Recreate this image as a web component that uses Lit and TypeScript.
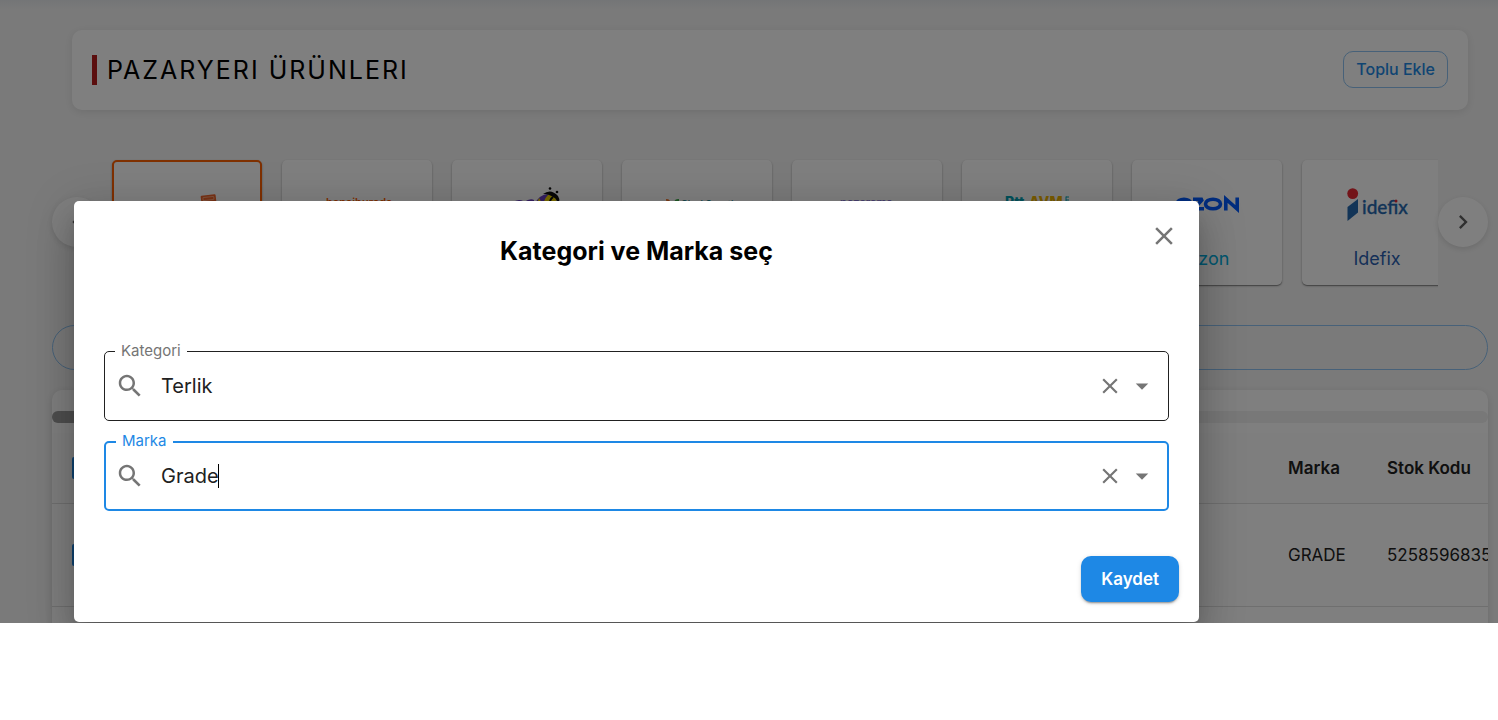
import { LitElement, html, svg, css, nothing } from "lit";
import { customElement, property } from "lit/decorators.js";

const LOGOS: Record<string, unknown> = {
  trendyol: svg`
    <text x="4" y="30" font-size="16" font-weight="600" fill="#444">trendyol</text>
    <rect x="49" y="10" width="15" height="8" rx="1" fill="#f2642a" transform="rotate(-7 56 14)" />
    <rect x="51" y="12" width="11" height="3" rx="1" fill="none" stroke="#ffa67a" transform="rotate(-7 56 14)" />`,
  hepsiburada: svg`<text x="4" y="21" font-size="11" font-weight="600" fill="#ff6000">hepsiburada</text>`,
  n11: svg`
    <g transform="translate(8 0)">
      <path d="M8 34l4-16q6-5 11-2v18zM22 34l2-17q6-4 10-2v19z" fill="#6a3fc4" />
      <path d="M34 20q8-16 22-8v20H35z" fill="#6a3fc4" />
      <path d="M39 13q3 3 1 8h-4zM48 10q-7 7-2 12h7q6-6 2-12z" fill="#f5d800" />
      <path d="M43 9q8-6 15 2q3 5-1 10q1-7-4-9q-4-3-10-3z" fill="#111" />
      <path d="M53 12q-4 3-3 8" stroke="#111" stroke-width="2" fill="none" />
      <circle cx="50" cy="3.500" r="1.300" fill="#111" />
      <circle cx="57" cy="7" r="1.300" fill="#111" />
    </g>`,
  ciceksepeti: svg`
    <path d="M4 14q5-1 6 9q-6-2-6-9z" fill="#f4762d" />
    <path d="M17 14q-6-1-6 9q7-2 6-9z" fill="#3fae49" />
    <text x="19" y="22" font-size="9" font-weight="600" fill="#2f8f9b">ÇiçekSepeti</text>`,
  pazarama: svg`<text x="8" y="21" font-size="11" font-weight="600" fill="#8f7fe0">pazarama</text>`,
  pttavm: svg`
    <text x="3" y="22" font-size="14" font-weight="800" fill="#00a5b8">Ptt</text>
    <text x="27" y="22" font-size="14" font-weight="800" fill="#f5b800">AVM</text>
    <path d="M64 11.500v6M64 12h3M64 15h3" stroke="#00a5b8" fill="none" />`,
  ozon: svg`
    <g fill="none" stroke="#005bff" stroke-width="3.600">
      <ellipse cx="12" cy="19" rx="7" ry="4.800" />
      <path d="M21 14.300h9.500L22 23.700h10" stroke-linejoin="bevel" />
      <ellipse cx="41" cy="19" rx="7.500" ry="4.800" />
      <path d="M53.800 25.500V14L65.200 24V12.500" />
    </g>`,
  idefix: svg`
    <circle cx="10.700" cy="8.600" r="5.400" fill="#e62832" />
    <path d="M5.500 22l10.500-8v13.500L5.500 36z" fill="#2568ae" />
    <text x="20" y="29" font-size="19" font-family="Lato, sans-serif" font-weight="500" fill="#2568ae" stroke="#2568ae" stroke-width=".3">idefix</text>
    <circle cx="54" cy="16" r="1.500" fill="#e62832" />`,
};

const MARKETS = [
  { id: "trendyol", name: "Trendyol", color: "#f27a1a" },
  { id: "hepsiburada", name: "Hepsiburada", color: "#ff6000" },
  { id: "n11", name: "N11", color: "#6a3fc4" },
  { id: "ciceksepeti", name: "ÇiçekSepeti", color: "#3fae49" },
  { id: "pazarama", name: "Pazarama", color: "#6a5fd0" },
  { id: "pttavm", name: "PttAVM", color: "#00a5b8" },
  { id: "ozon", name: "Ozon", color: "#00aee0" },
  { id: "idefix", name: "Idefix", color: "#2b5fb0" },
];

const icon = (d: string, size: number) => html`
  <svg width=${size} height=${size} viewBox="0 0 24 24" fill="currentColor" aria-hidden="true"><path d=${d}></path></svg>
`;
const SEARCH =
  "M15.500 14h-.79l-.28-.27C15.410 12.590 16 11.110 16 9.500 16 5.910 13.090 3 9.500 3S3 5.910 3 9.500 5.910 16 9.500 16c1.610 0 3.090-.59 4.230-1.570l.27.28v.79l5 4.990L20.490 19l-4.990-5zm-6 0C7.010 14 5 11.990 5 9.500S7.010 5 9.500 5 14 7.010 14 9.500 11.990 14 9.500 14z";
const CLOSE =
  "M19 6.410L17.590 5 12 10.590 6.410 5 5 6.410 10.590 12 5 17.590 6.410 19 12 13.410 17.590 19 19 17.590 13.410 12z";
const DROP = "M7 10l5 5 5-5z";
const NEXT = "M10 6L8.590 7.410 13.170 12l-4.580 4.590L10 18l6-6z";
const PREV = "M15.410 7.410L14 6l-6 6 6 6 1.410-1.410L10.830 12z";

@customElement("market-card")
class MarketCard extends LitElement {
  @property() market = "";
  @property() name = "";
  @property() color = "";
  @property({ type: Boolean, reflect: true }) selected = false;

  static styles = css`
    :host { flex: 0 0 150px; display: block; }
    .card {
      box-sizing: border-box; width: 100%; padding: 23px 0 12px; border: 2px solid transparent;
      border-radius: 5px; background: #fff; font: 400 18px/24px Inter, sans-serif; cursor: pointer;
      display: flex; flex-direction: column; align-items: center; gap: 20px;
      box-shadow: 0 1px 3px rgba(0, 0, 0, 0.2), 0 1px 1px rgba(0, 0, 0, 0.35);
    }
    :host([selected]) .card { border-color: #ff6000; }
    .logo { display: block; overflow: visible; font-family: Inter, sans-serif; }
  `;

  render() {
    return html`
      <button class="card" style="color:${this.color}">
        <svg class="logo" width="70" height="42" viewBox="0 0 70 42" aria-hidden="true">${LOGOS[this.market]}</svg>
        <span>${this.name}</span>
      </button>
    `;
  }
}

@customElement("combo-field")
class ComboField extends LitElement {
  @property() label = "";
  @property() value = "";
  @property({ type: Boolean, reflect: true }) active = false;

  static styles = css`
    :host { display: block; font-family: Inter, sans-serif; }
    .field {
      position: relative; box-sizing: border-box; display: flex; align-items: center; min-height: 70px;
      padding: 0 9px 0 10px; border: 1px solid #212121; border-radius: 5px; color: #757575;
    }
    :host([active]) .field { border: 2px solid #1e88e5; padding: 0 8px 0 9px; }
    .label {
      position: absolute; left: 10px; top: -11px; padding: 0 6px; background: #fff;
      font-size: 15px; line-height: 20px; color: #757575;
    }
    :host([active]) .label { top: -12px; left: 10px; color: #1e88e5; }
    .text { display: flex; align-items: center; flex: 1; margin-left: 16px; min-width: 0; }
    .input {
      field-sizing: content; max-width: 100%; border: 0; padding: 0; outline: 0; background: none;
      font: 400 20px/28px Inter, sans-serif; color: #212121; caret-color: transparent;
    }
    .caret { width: 1px; height: 24px; margin-left: -1px; background: #000; }
    .act { display: flex; padding: 2px; border: 0; background: none; color: inherit; cursor: pointer; }
    svg { display: block; }
  `;

  render() {
    return html`
      <div class="field">
        <label class="label" for="input">${this.label}</label>
        ${icon(SEARCH, 30)}
        <div class="text">
          <input id="input" class="input" role="combobox" aria-expanded="false" .value=${this.value} />
          ${this.active ? html`<span class="caret"></span>` : nothing}
        </div>
        <button class="act" aria-label="Temizle">${icon(CLOSE, 26)}</button>
        <button class="act" aria-label="Aç">${icon(DROP, 30)}</button>
      </div>
    `;
  }
}

@customElement("app-root")
class AppRoot extends LitElement {
  static styles = css`
    :host { display: block; min-height: 100vh; background: #fff; font-family: Inter, sans-serif; }
    .stage { position: relative; height: calc(100vh - 97px); overflow: hidden; background: #f5f5f5; }
    .page { padding: 30px 10px 0 52px; background: linear-gradient(#e8ebee, #f5f5f5 10px); }
    .head {
      display: flex; align-items: center; justify-content: space-between; margin: 0 20px; padding: 20px;
      min-height: 40px; background: #fff; border-radius: 10px; box-shadow: 0 2px 10px rgba(0, 0, 0, 0.1);
    }
    .title {
      margin: 0; padding-left: 10px; border-left: 5px solid #b71c1c;
      font-size: 25px; line-height: 30px; font-weight: 400; letter-spacing: 2px; color: #000;
    }
    .bulk {
      padding: 0 12px; border: 1px solid #8ec3f2; border-radius: 10px; background: none;
      font: 500 16px/35px Inter, sans-serif; color: #1e88e5; cursor: pointer; align-self: flex-start; margin-top: 1px;
    }
    .carousel { display: flex; align-items: center; margin-top: 39px; }
    .strip { flex: 1; min-width: 0; overflow: hidden; display: flex; gap: 20px; padding: 11px 10px 10px; }
    .arrow {
      flex: none; display: flex; align-items: center; justify-content: center; width: 50px; height: 50px;
      padding: 0; border: 0; border-radius: 50%; background: #fff; color: #616161;
      box-shadow: 0 2px 6px rgba(0, 0, 0, 0.12); cursor: pointer;
    }
    .search {
      box-sizing: border-box; display: block; width: 100%; height: 45px; margin: 30px 0 20px; padding: 0 24px;
      border: 1px solid #8ec3f2; border-radius: 23px; background: none; outline: 0; font: 400 17px Inter, sans-serif;
    }
    .sheet { overflow: hidden; border-radius: 10px; background: #fff; box-shadow: 0 2px 8px rgba(0, 0, 0, 0.12); }
    .track { margin: 21px 0 10px; height: 12px; border-radius: 6px; background: #f0f0f0; }
    .thumb { width: 60%; height: 12px; border-radius: 6px; background: #9e9e9e; }
    .table {
      width: calc(100% + 79px); table-layout: fixed; border-collapse: collapse;
      font-size: 17px; line-height: 24px; color: #212121; text-align: left;
    }
    .table th { height: 70px; padding: 0 20px; background: #fcfcfc; font-weight: 600; border-bottom: 1px solid #dedede; }
    .table td { height: 102px; padding: 0 20px; border-bottom: 1px solid #dedede; }
    .c-check { width: 70px; }
    .c-brand { width: 99px; }
    .c-stock { width: 200px; }
    .check { display: block; width: 22px; height: 22px; margin: 0; accent-color: #1e88e5; }
    .backdrop {
      position: absolute; inset: 0; display: flex; align-items: flex-start;
      padding: 201px 299px 0 74px; background: rgba(0, 0, 0, 0.5);
    }
    .dialog {
      flex: 1; min-width: 0; border-radius: 5px; background: #fff; display: flex; flex-direction: column;
      box-shadow: 0 11px 15px -7px rgba(0, 0, 0, 0.2), 0 24px 38px 3px rgba(0, 0, 0, 0.14), 0 9px 46px 8px rgba(0, 0, 0, 0.12);
    }
    .bar { display: grid; grid-template-columns: 50px 1fr 50px; padding: 15px 10px 0; }
    .heading {
      grid-column: 2; margin: 0; padding-top: 17px; text-align: center;
      font-size: 25px; line-height: 36px; font-weight: 700; color: #000;
    }
    .close {
      grid-column: 3; display: flex; align-items: center; justify-content: center; width: 50px; height: 40px;
      padding: 0; border: 0; background: none; color: #757575; cursor: pointer;
    }
    .fields { display: flex; flex-direction: column; gap: 20px; padding: 82px 30px 0; }
    .actions { display: flex; justify-content: flex-end; padding: 45px 20px 20px; }
    .save {
      padding: 0 20px; border: 0; border-radius: 10px; background: #1e88e5; color: #fff;
      font: 600 17px/46px Inter, sans-serif; cursor: pointer;
      box-shadow: 0 3px 1px -2px rgba(0, 0, 0, 0.2), 0 2px 2px rgba(0, 0, 0, 0.14), 0 1px 5px rgba(0, 0, 0, 0.12);
    }
  `;

  private row(brand: string, stock: string) {
    return html`<tr>
      <td><input class="check" type="checkbox" aria-label="Satırı seç" checked /></td>
      <td></td>
      <td>${brand}</td>
      <td>${stock}</td>
    </tr>`;
  }

  render() {
    return html`
      <div class="stage">
        <main class="page">
          <header class="head">
            <h1 class="title">PAZARYERI ÜRÜNLERI</h1>
            <button class="bulk">Toplu Ekle</button>
          </header>
          <div class="carousel">
            <button class="arrow" aria-label="Önceki">${icon(PREV, 28)}</button>
            <div class="strip">
              ${MARKETS.map(
                (m, i) => html`<market-card .market=${m.id} .name=${m.name} .color=${m.color} ?selected=${i === 0}></market-card>`
              )}
            </div>
            <button class="arrow" aria-label="Sonraki">${icon(NEXT, 28)}</button>
          </div>
          <input class="search" type="search" aria-label="Ara" />
          <section class="sheet">
            <div class="track"><div class="thumb"></div></div>
            <table class="table">
              <colgroup><col class="c-check" /><col /><col class="c-brand" /><col class="c-stock" /></colgroup>
              <thead>
                <tr>
                  <th><input class="check" type="checkbox" aria-label="Tümünü seç" checked /></th>
                  <th></th>
                  <th>Marka</th>
                  <th>Stok Kodu</th>
                </tr>
              </thead>
              <tbody>${this.row("GRADE", "5258596835")} ${this.row("", "")}</tbody>
            </table>
          </section>
        </main>
        <div class="backdrop">
          <section class="dialog" role="dialog" aria-modal="true" aria-labelledby="heading">
            <div class="bar">
              <h2 class="heading" id="heading">Kategori ve Marka seç</h2>
              <button class="close" aria-label="Kapat">${icon(CLOSE, 30)}</button>
            </div>
            <div class="fields">
              <combo-field label="Kategori" value="Terlik"></combo-field>
              <combo-field label="Marka" value="Grade" active></combo-field>
            </div>
            <div class="actions"><button class="save">Kaydet</button></div>
          </section>
        </div>
      </div>
    `;
  }
}
